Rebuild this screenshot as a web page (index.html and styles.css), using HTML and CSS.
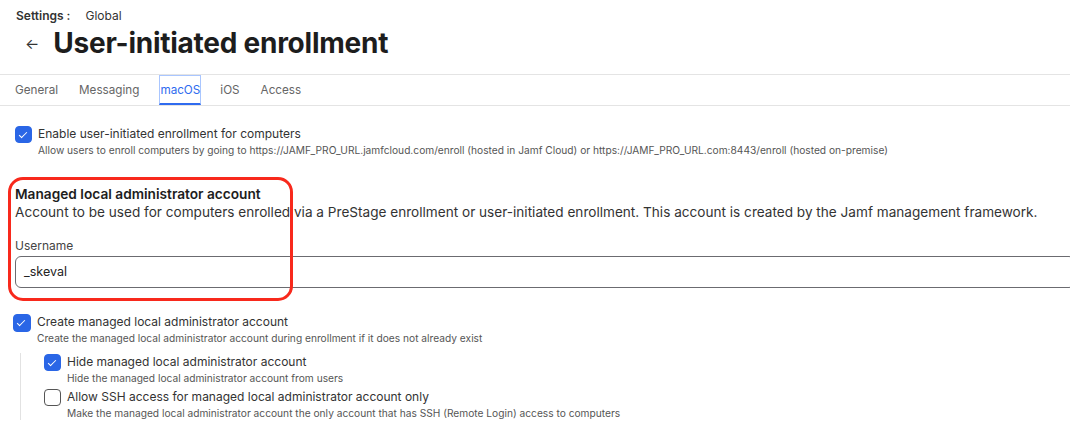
FILE: index.html
```html
<!DOCTYPE html>
<html lang="en">
<head>
  <meta charset="UTF-8" />
  <title>User-initiated enrollment</title>
  <link rel="stylesheet" href="styles.css">
</head>
<body>

  <div class="header">
    <div class="crumbs"><b>Settings :</b><span>Global</span></div>
    <div class="title-row">
      <span class="back">&#8592;</span>
      <h1>User-initiated enrollment</h1>
    </div>
  </div>

  <div class="tabs">
    <span class="tab">General</span>
    <span class="tab">Messaging</span>
    <span class="tab active">macOS</span>
    <span class="tab">iOS</span>
    <span class="tab">Access</span>
  </div>

  <div class="content">
    <div class="option">
      <span class="box checked"></span>
      <div>
        <div class="label">Enable user-initiated enrollment for computers</div>
        <div class="hint">Allow users to enroll computers by going to https://JAMF_PRO_URL.jamfcloud.com/enroll (hosted in Jamf Cloud) or https://JAMF_PRO_URL.com:8443/enroll (hosted on-premise)</div>
      </div>
    </div>

    <div class="section">
      <div class="highlight"></div>
      <h2>Managed local administrator account</h2>
      <p>Account to be used for computers enrolled via a PreStage enrollment or user-initiated enrollment. This account is created by the Jamf management framework.</p>
      <label class="field-label">Username</label>
      <div class="input">_skeval</div>
    </div>

    <div class="option create">
      <span class="box checked"></span>
      <div>
        <div class="label">Create managed local administrator account</div>
        <div class="hint">Create the managed local administrator account during enrollment if it does not already exist</div>
      </div>
    </div>

    <div class="nested">
      <div class="option">
        <span class="box checked"></span>
        <div>
          <div class="label">Hide managed local administrator account</div>
          <div class="hint">Hide the managed local administrator account from users</div>
        </div>
      </div>
      <div class="option">
        <span class="box"></span>
        <div>
          <div class="label">Allow SSH access for managed local administrator account only</div>
          <div class="hint">Make the managed local administrator account the only account that has SSH (Remote Login) access to computers</div>
        </div>
      </div>
    </div>
  </div>

</body>
</html>
```

FILE: styles.css
```css
body {
  margin: 0;
  font-family: Inter, "Noto Sans", sans-serif;
  color: #2b2b2b;
  background: #fff;
  overflow: hidden;
}
.header {
  padding: 8px 16px 0;
}
.crumbs {
  font-size: 12px;
  display: flex;
  gap: 15px;
  color: #333;
}
.crumbs b {
  font-weight: 600;
}
.title-row {
  display: flex;
  align-items: center;
  gap: 14px;
  margin-top: 2px;
  height: 36px;
}
.back {
  font-size: 15px;
  color: #333;
  padding-left: 9px;
}
h1 {
  margin: 0;
  font-size: 28px;
  font-weight: 700;
  color: #1d1d1d;
  letter-spacing: -0.25px;
}
.tabs {
  margin-top: 13px;
  border-top: 1px solid #e4e4e4;
  border-bottom: 1px solid #e4e4e4;
  height: 30px;
  display: flex;
  padding-left: 15px;
  gap: 21px;
}
.tab {
  font-size: 11.7px;
  color: #666;
  line-height: 31px;
}
.tab.active {
  color: #2f6bef;
  border: 1px solid #a9c6ff;
  border-bottom: 2px solid #2f6bef;
  margin: 0 -2px 0 -1px;
  line-height: 28px;
}
.content {
  padding: 19px 15px 0;
}
.option {
  display: flex;
  gap: 6px;
}
.box {
  flex: none;
  width: 17px;
  height: 17px;
  box-sizing: border-box;
  border: 1.5px solid #555;
  border-radius: 4px;
  margin-top: 1px;
  position: relative;
}
.box.checked {
  background: #2a66e6;
  border-color: #2a66e6;
}
.box.checked::after {
  content: "";
  position: absolute;
  left: 5px;
  top: 2.5px;
  width: 3px;
  height: 7px;
  border: solid #fff;
  border-width: 0 1.5px 1.5px 0;
  transform: rotate(45deg);
}
.label {
  font-size: 12px;
  color: #333;
  line-height: 17px;
}
.hint {
  font-size: 10.2px;
  color: #555;
  line-height: 14px;
  margin-top: 1px;
}
.section {
  position: relative;
  margin-top: 29px;
}
.highlight {
  position: absolute;
  left: -7px;
  top: -9px;
  width: 279px;
  height: 118px;
  border: 3px solid #f8291c;
  border-radius: 15px;
}
h2 {
  margin: 0;
  font-size: 13.7px;
  font-weight: 600;
  color: #1d1d1d;
  line-height: 17px;
}
.section p {
  margin: 1px 0 0;
  font-size: 13.6px;
  color: #333;
  line-height: 17px;
}
.field-label {
  display: block;
  margin-top: 17px;
  font-size: 12px;
  color: #444;
  line-height: 15px;
}
.input {
  margin-top: 3px;
  margin-right: -20px;
  height: 32px;
  box-sizing: border-box;
  border: 1px solid #6b6b70;
  border-radius: 6px;
  padding: 0 8px;
  font-size: 12.5px;
  line-height: 30px;
  color: #222;
}
.create {
  margin-top: 25px;
  margin-left: -2px;
}
.create .box {
  width: 18px;
  height: 18px;
}
.nested {
  margin: 8px 0 0 5px;
  padding: 0 0 0 23px;
  border-left: 1px solid #e2e2e2;
  display: flex;
  flex-direction: column;
  gap: 3px;
}
```
